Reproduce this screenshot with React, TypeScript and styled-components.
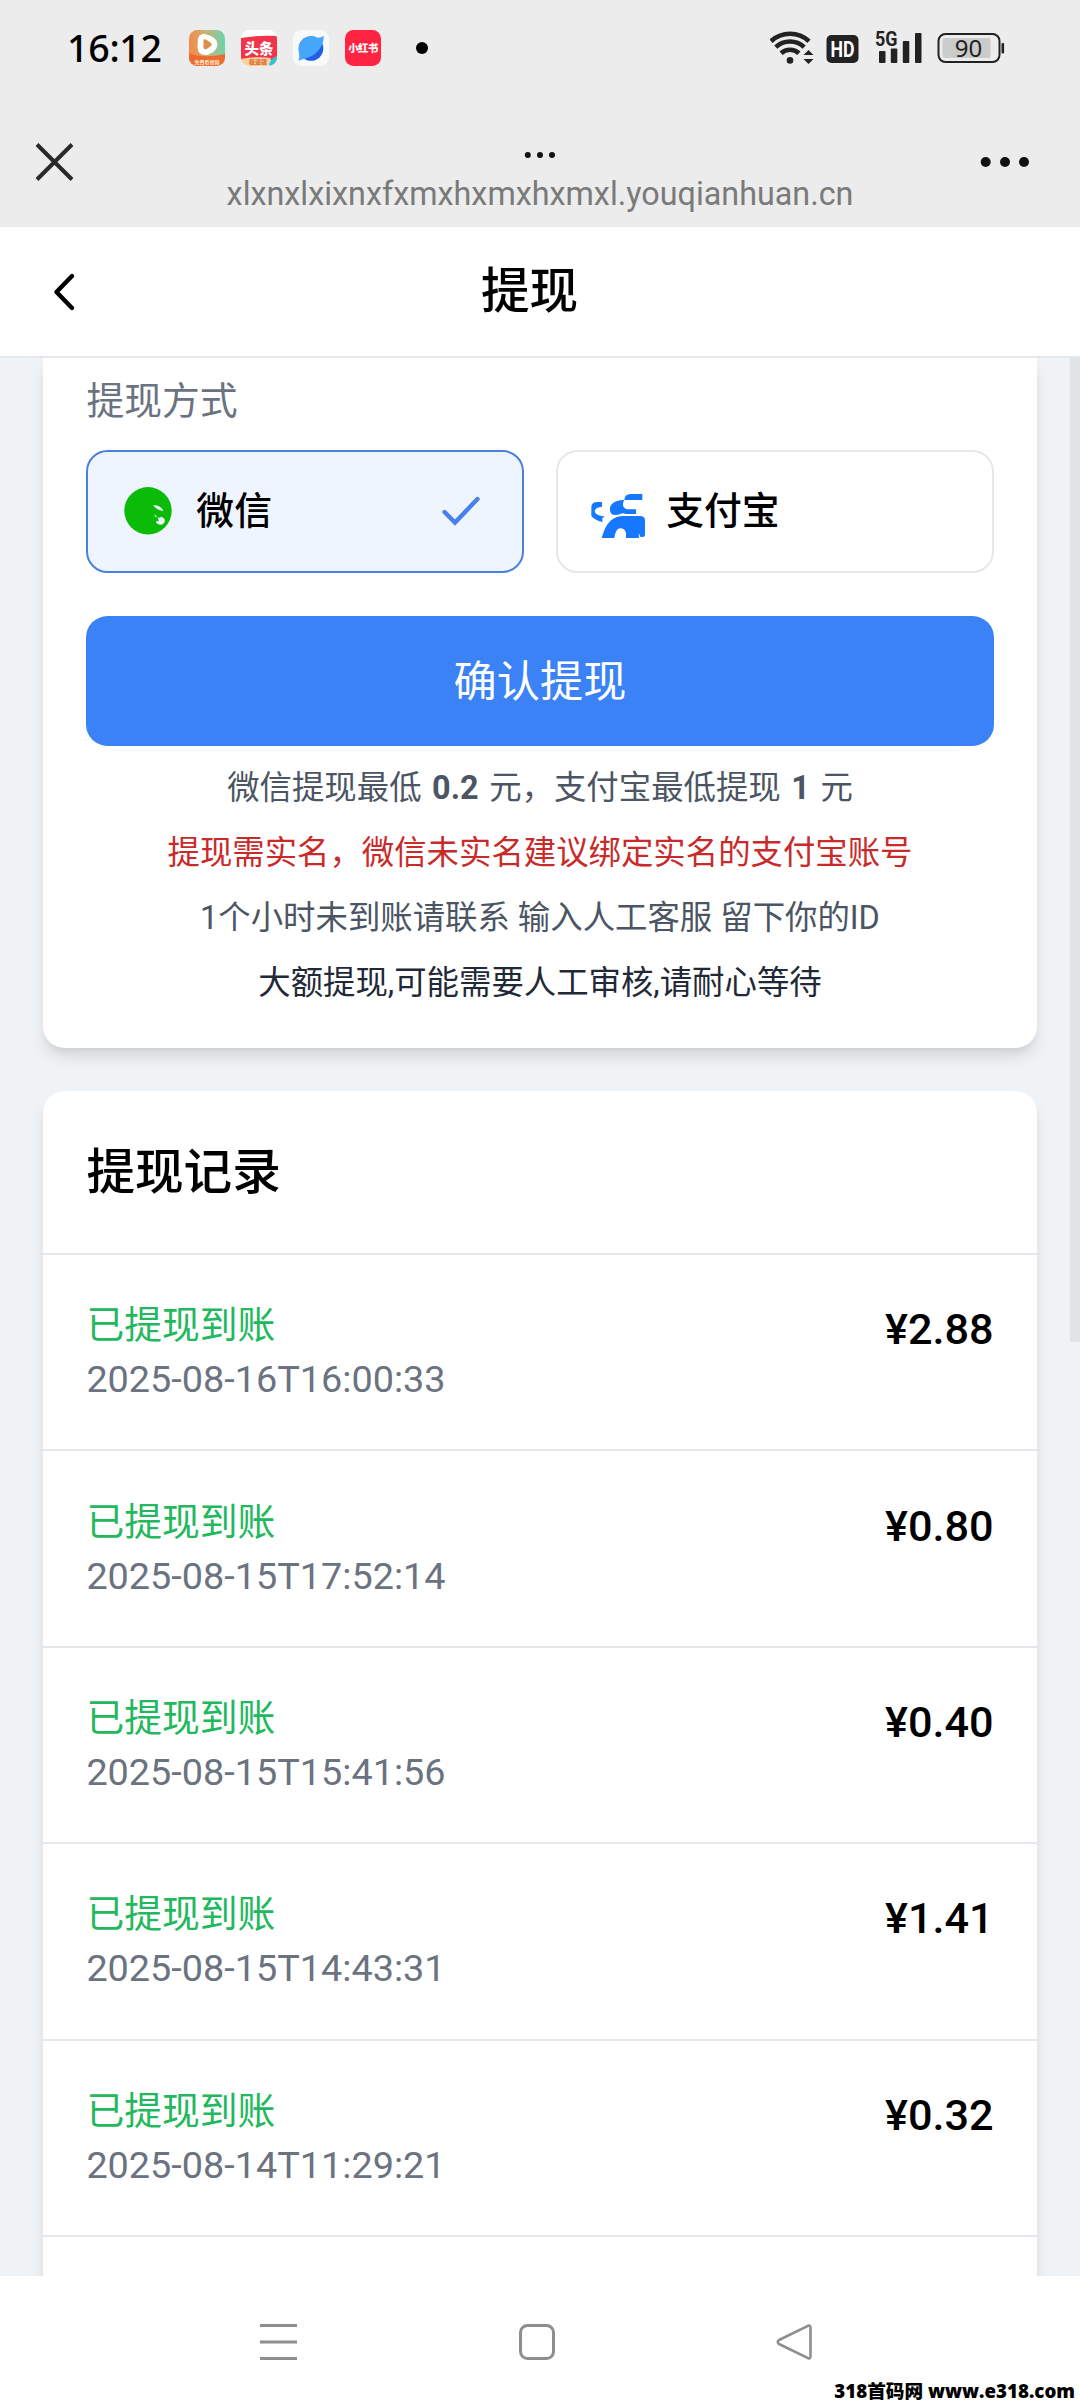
import React from "react";
import styled, { createGlobalStyle } from "styled-components";

const GlobalStyle = createGlobalStyle`
  *, *::before, *::after { box-sizing: border-box; }
  body { margin: 0; background: #fff; }
  button { font: inherit; border: 0; padding: 0; background: none; color: inherit; }
  svg { display: block; flex: none; }
`;

const sans = `Roboto, "Noto Sans CJK SC", sans-serif`;

const Screen = styled.div`
  position: relative;
  display: flex;
  flex-direction: column;
  width: 1080px;
  height: 2408px;
  overflow: hidden;
  background: #eff3f6;
  color: #000;
  font-family: ${sans};
`;

const SystemArea = styled.header`
  flex: none;
  height: 227px;
  background: #ececec;
`;

const StatusBar = styled.div`
  display: flex;
  align-items: center;
  height: 96px;
  padding: 0 74px 0 67px;
`;

const Clock = styled.time`
  width: 122px;
  font: 500 37.6px/48px "Noto Sans", sans-serif;
  letter-spacing: -0.3px;
`;

const AppIcons = styled.div`
  display: flex;
  align-items: center;
  gap: 16px;
`;

const MoreDot = styled.i`
  width: 12px;
  height: 12px;
  margin-left: 35px;
  border-radius: 50%;
  background: #000;
`;

const StatusIcons = styled.div`
  display: flex;
  align-items: center;
  margin-left: auto;
`;

const BrowserBar = styled.div`
  display: grid;
  grid-template-columns: 110px 1fr 110px;
  align-items: center;
  height: 131px;
`;

const IconButton = styled.button<{ $end?: boolean }>`
  display: flex;
  justify-content: ${(p) => (p.$end ? "flex-end" : "flex-start")};
  align-items: center;
`;

const Address = styled.div`
  display: flex;
  flex-direction: column;
  align-items: center;
  align-self: start;
  gap: 15px;
  padding-top: 54.5px;
  color: #7a7a7a;
  font-size: 32.3px;
  line-height: 40px;
  white-space: nowrap;
`;

const TitleBar = styled.div`
  flex: none;
  display: grid;
  grid-template-columns: 110px 1fr 131px;
  align-items: center;
  height: 131px;
  background: #fff;
  border-bottom: 2px solid #e5e7eb;
`;

const Title = styled.h1`
  margin: 0;
  text-align: center;
  font-size: 48.6px;
  font-weight: 500;
  line-height: 76px;
`;

const Content = styled.main`
  flex: 1;
  min-height: 0;
  position: relative;
  display: flex;
  flex-direction: column;
  gap: 43.2px;
  padding: 0 43.2px;
  overflow: hidden;
`;

const Card = styled.section<{ $continued?: boolean }>`
  flex: none;
  background: #fff;
  border-radius: ${(p) => (p.$continued ? "0 0 21.6px 21.6px" : "21.6px")};
  box-shadow: 0 10.8px 16.2px -2.7px rgba(0, 0, 0, 0.1), 0 5.4px 10.8px -5.4px rgba(0, 0, 0, 0.1);
`;

const Form = styled.div`
  display: flex;
  flex-direction: column;
  padding: 16.4px 43.2px 43.2px;
`;

const Label = styled.div`
  margin-bottom: 21.6px;
  color: #6b7280;
  font-size: 37.8px;
  line-height: 54px;
`;

const Methods = styled.div`
  display: grid;
  grid-template-columns: 1fr 1fr;
  gap: 32.4px;
  margin-bottom: 43.2px;
`;

const Method = styled.button<{ $active?: boolean }>`
  display: flex;
  align-items: center;
  gap: 21.6px;
  height: 122.8px;
  padding: 0 41px 0 32.4px;
  border: 2px solid ${(p) => (p.$active ? "#4c80dd" : "#e5e7eb")};
  border-radius: 21.6px;
  background: ${(p) => (p.$active ? "#eff5fe" : "#fff")};
  font-size: 37.8px;
  font-weight: 500;
  line-height: 54px;
`;

const MethodName = styled.span`
  flex: 1;
  text-align: left;
`;

const Submit = styled.button`
  height: 129.6px;
  margin-bottom: 21.6px;
  padding-bottom: 6px;
  border-radius: 21.6px;
  background: #3b82f6;
  color: #fff;
  font-size: 43.2px;
`;

const Notes = styled.div`
  display: flex;
  flex-direction: column;
  gap: 21.6px;
  text-align: center;
  white-space: nowrap;
`;

const Note = styled.p<{ $color: string; $spaced?: boolean }>`
  margin: 0;
  color: ${(p) => p.$color};
  font-size: 32.4px;
  line-height: 43.2px;
  word-spacing: ${(p) => (p.$spaced ? "2.5px" : "normal")};
`;

const RecordsTitle = styled.h2`
  margin: 0;
  padding: 44.2px 43.2px 42.2px;
  border-bottom: 2px solid #e5e7eb;
  font-size: 48.6px;
  font-weight: 500;
  line-height: 75.6px;
`;

const Record = styled.div`
  display: flex;
  justify-content: space-between;
  align-items: flex-start;
  height: 196.4px;
  padding: 43.2px;
  border-bottom: 2px solid #e5e7eb;
`;

const RecordInfo = styled.div`
  display: flex;
  flex-direction: column;
  font-size: 37.8px;
  line-height: 54px;
`;

const RecordStatus = styled.span`
  color: #22b85d;
`;

const RecordTime = styled.span`
  color: #6b7280;
`;

const Amount = styled.span`
  font-size: 43.2px;
  font-weight: 500;
  line-height: 64.8px;
`;

const ScrollThumb = styled.div`
  position: absolute;
  top: 0;
  right: 0;
  width: 10px;
  height: 984px;
  background: #e0e4e7;
`;

const Trace = styled.span<{ $x: number; $y: number; $angle: number }>`
  position: absolute;
  left: ${(p) => p.$x}px;
  top: ${(p) => p.$y}px;
  transform: rotate(${(p) => p.$angle}deg);
  transform-origin: 0 50%;
  color: rgba(0, 0, 0, 0.022);
  font: 27px/30px "Liberation Mono", monospace;
  pointer-events: none;
`;

const NavBar = styled.nav`
  flex: none;
  display: flex;
  justify-content: space-between;
  padding: 48px 268px 0 260px;
  height: 132px;
  background: #fefefe;
`;

const SiteMark = styled.div`
  position: absolute;
  right: 5px;
  bottom: 4px;
  color: #000;
  font: 800 18.7px/26px "Open Sans", "Noto Sans CJK SC", sans-serif;
  white-space: nowrap;
`;

const VideoAppIcon = () => (
  <svg width="36" height="36" viewBox="0 0 36 36">
    <defs>
      <linearGradient id="video" x1="0" y1="0.2" x2="1" y2="0.1">
        <stop offset="0" stopColor="#f58a4b" />
        <stop offset="0.5" stopColor="#c3b478" />
        <stop offset="1" stopColor="#66d6b0" />
      </linearGradient>
      <clipPath id="videoClip"><rect width="36" height="36" rx="8.5" /></clipPath>
    </defs>
    <g clipPath="url(#videoClip)">
      <rect width="36" height="36" fill="url(#video)" />
      <path d="M0 23 Q14 29 36 24 V36 H0Z" fill="#ee6a30" />
      <path d="M9 9 Q10 3.5 16 4 Q28 7 28.5 14 Q28 22 18 25 Q9 26 8.5 17Z" fill="#fff" />
      <path d="M14.5 10.5 Q15 8.8 17 9.5 L22 13 Q23.5 14.5 22 16 L17.5 19 Q15.5 20 14.5 18Z" fill="#dd8d4d" />
      <text x="18" y="34" textAnchor="middle" fontSize="5" fontWeight="700" fill="#ffe9c9" fontFamily="Noto Sans CJK SC">免费看视频</text>
    </g>
  </svg>
);

const NewsAppIcon = () => (
  <svg width="36" height="36" viewBox="0 0 36 36">
    <defs><clipPath id="newsClip"><rect width="36" height="36" rx="8.5" /></clipPath></defs>
    <g clipPath="url(#newsClip)">
      <rect width="36" height="36" fill="#fff" />
      <path d="M0 8 Q18 5 36 6 V30 H0Z" fill="#f1344a" />
      <path d="M0 29 Q16 26 30 28 L27 36 H0Z" fill="#fbd09a" />
      <path d="M28 36 Q28 29 36 26 V36Z" fill="#35c4cc" />
      <text x="18" y="23.5" textAnchor="middle" fontSize="14.5" fontWeight="900" fill="#fff" fontFamily="Noto Sans CJK SC">头条</text>
      <text x="17" y="34.3" textAnchor="middle" fontSize="6" fontWeight="700" fill="#d8662f" fontFamily="Noto Sans CJK SC">极速版</text>
    </g>
  </svg>
);

const BrowserAppIcon = () => (
  <svg width="36" height="36" viewBox="0 0 36 36">
    <rect width="36" height="36" rx="8.5" fill="#f8f9fa" />
    <circle cx="18" cy="18.5" r="12.3" fill="#2260e8" />
    <path d="M5.5 30.8 Q7 28 6 23 Q4 14 11 8.5 Q18 4.5 24.5 7.8 Q28 8 30.8 5.7 Q30.8 11 28.5 16 Q23 25.5 13.5 28.3 Q8 29.5 5.5 30.8Z" fill="#45a7fb" />
  </svg>
);

const RedAppIcon = () => (
  <svg width="36" height="36" viewBox="0 0 36 36">
    <rect width="36" height="36" rx="8.5" fill="#ff2442" />
    <text x="18" y="22.3" textAnchor="middle" fontSize="10.3" fontWeight="900" fill="#fff" fontFamily="Noto Sans CJK SC" letterSpacing="-0.5">小红书</text>
  </svg>
);

const SignalIcons = () => (
  <svg width="236" height="40" viewBox="771.5 28 236 40">
    <g fill="none" stroke="#222" strokeWidth="4.6">
      <path d="M772.5 41.2 A28 28 0 0 1 810.5 41.2" />
      <path d="M777.3 47.2 A20.5 20.5 0 0 1 805.7 47.2" />
      <path d="M782.6 53.2 A13 13 0 0 1 800.4 53.2" />
    </g>
    <circle cx="791.5" cy="60.4" r="3.3" fill="#222" />
    <path d="M805 55 L810 50 L815 55Z M805 59 H815 L810 64Z" fill="#222" />
    <rect x="828" y="35" width="32" height="28" rx="5" fill="#222" />
    <text x="844" y="57" textAnchor="middle" fontSize="21.5" fontWeight="700" fill="#fff" fontFamily="Roboto" textLength="24" lengthAdjust="spacingAndGlyphs">HD</text>
    <text x="876.5" y="46" fontSize="20.5" fontWeight="700" fill="#222" fontFamily="Roboto" textLength="22.5" lengthAdjust="spacingAndGlyphs">5G</text>
    <g fill="#222">
      <rect x="880.5" y="51" width="6.5" height="12" rx="1" />
      <rect x="892.3" y="48.5" width="6.5" height="14.5" rx="1" />
      <rect x="904.3" y="41" width="6.5" height="22" rx="1" />
      <rect x="916.5" y="33" width="6.5" height="30" rx="1" />
    </g>
    <rect x="940" y="34" width="61" height="28" rx="7" fill="none" stroke="#222" strokeWidth="2" />
    <rect x="944" y="38" width="48" height="20" rx="2" fill="#cbcbcb" />
    <rect x="1003" y="43" width="2.6" height="10.5" rx="1" fill="#222" />
    <text x="970" y="57" textAnchor="middle" fontSize="24" fill="#222" fontFamily="Noto Sans">90</text>
  </svg>
);

const WechatIcon = () => (
  <svg width="54" height="54" viewBox="0 0 54 54">
    <circle cx="27" cy="26.8" r="23.7" fill="#0abb07" />
    <path d="M32 21.2 Q40 20.8 42.3 27 Q36 26.4 32 21.2Z" fill="#eff5fe" />
    <path d="M33.3 30 L36 32.4 L34.4 33.2Z" fill="#eff5fe" />
    <path d="M36.5 33.2 Q38.5 34.5 40 32.8 Q44 33.8 43.8 37 Q43 40.8 39.5 40.8 Q35 40.2 35 37.6 L38 36.8Z" fill="#eff5fe" />
  </svg>
);

const AlipayIcon = () => (
  <svg width="54" height="54" viewBox="62 12 162 162" fill="#1677ff">
    <path d="M162 60 Q163 42 181 42 H216 V60Z" />
    <path d="M162 60 Q157 66 158 76 Q161 87 172 88 H197 V102 H166 Q158 98 150 102 Q138 107 124 103 Q114 90 122 75 Q134 60 162 60Z" />
    <path d="M63 81 Q63 68 79 66 H95 V80 Q75 82 73 94 Q75 107 104 110 L96 114 V126 Q73 120 63 108Z" />
    <path d="M94 174 Q103 139 122 121 Q137 108 160 108 H211 Q224 109 224 121 V165 Q224 173 210 170 L205 159 L206 174 H167 V160 Q164 145 150 145 Q136 145 132 174Z" />
  </svg>
);

const records = [
  ["2025-08-16T16:00:33", "¥2.88"],
  ["2025-08-15T17:52:14", "¥0.80"],
  ["2025-08-15T15:41:56", "¥0.40"],
  ["2025-08-15T14:43:31", "¥1.41"],
  ["2025-08-14T11:29:21", "¥0.32"],
];

const traces = [
  [312, 662, 7], [645, 680, 35], [185, 930, -76], [380, 1025, -3],
  [20, 1060, 38], [365, 1300, 30], [490, 1480, -84], [730, 1600, 32],
  [165, 390, 8], [10, 1200, 35],
];

export default function App() {
  return (
    <Screen>
      <GlobalStyle />
      <SystemArea>
        <StatusBar>
          <Clock>16:12</Clock>
          <AppIcons>
            <VideoAppIcon />
            <NewsAppIcon />
            <BrowserAppIcon />
            <RedAppIcon />
          </AppIcons>
          <MoreDot />
          <StatusIcons>
            <SignalIcons />
          </StatusIcons>
        </StatusBar>
        <BrowserBar>
          <IconButton aria-label="关闭">
            <svg width="110" height="42" viewBox="0 0 110 42">
              <path d="M37 3.5 L72 38.5 M72 3.5 L37 38.5" stroke="#2a2a2a" strokeWidth="4" />
            </svg>
          </IconButton>
          <Address>
            <svg width="32" height="8" viewBox="0 0 32 8" fill="#111">
              <circle cx="3.8" cy="4" r="3" /><circle cx="16" cy="4" r="3" /><circle cx="28" cy="4" r="3" />
            </svg>
            <span>xlxnxlxixnxfxmxhxmxhxmxl.youqianhuan.cn</span>
          </Address>
          <IconButton $end aria-label="更多">
            <svg width="110" height="12" viewBox="970 0 110 12" fill="#111">
              <circle cx="985.7" cy="6" r="5" /><circle cx="1005" cy="6" r="5" /><circle cx="1024" cy="6" r="5" />
            </svg>
          </IconButton>
        </BrowserBar>
      </SystemArea>
      <TitleBar>
        <IconButton aria-label="返回">
          <svg width="110" height="40" viewBox="0 0 110 40" fill="none">
            <path d="M72 4 L56.5 20 L72 36" stroke="#000" strokeWidth="4.4" strokeLinecap="round" strokeLinejoin="round" />
          </svg>
        </IconButton>
        <Title>提现</Title>
      </TitleBar>
      <Content>
        <Card $continued>
          <Form>
            <Label>提现方式</Label>
            <Methods>
              <Method $active>
                <WechatIcon />
                <MethodName>微信</MethodName>
                <svg width="40" height="32" viewBox="0 0 40 32" fill="none">
                  <path d="M3.5 17 L14 27.5 L36.5 4" stroke="#4880ee" strokeWidth="4.4" strokeLinecap="round" />
                </svg>
              </Method>
              <Method>
                <AlipayIcon />
                <MethodName>支付宝</MethodName>
              </Method>
            </Methods>
            <Submit>确认提现</Submit>
            <Notes>
              <Note $color="#4b5563" $spaced>微信提现最低 <b>0.2</b> 元，支付宝最低提现 <b>1</b> 元</Note>
              <Note $color="#c92a2a">提现需实名，微信未实名建议绑定实名的支付宝账号</Note>
              <Note $color="#4b5563">1个小时未到账请联系 输入人工客服 留下你的ID</Note>
              <Note $color="#1f2937">大额提现,可能需要人工审核,请耐心等待</Note>
            </Notes>
          </Form>
        </Card>
        <Card>
          <RecordsTitle>提现记录</RecordsTitle>
          {records.map(([time, amount]) => (
            <Record key={time}>
              <RecordInfo>
                <RecordStatus>已提现到账</RecordStatus>
                <RecordTime>{time}</RecordTime>
              </RecordInfo>
              <Amount>{amount}</Amount>
            </Record>
          ))}
          <Record />
        </Card>
        {traces.map(([x, y, angle]) => (
          <Trace key={`${x}-${y}`} $x={x} $y={y} $angle={angle} aria-hidden>MRMjUzMDYOOQ==</Trace>
        ))}
        <ScrollThumb />
      </Content>
      <NavBar>
        <svg width="37" height="36" viewBox="0 0 37 36" stroke="#8e8e8e" strokeWidth="3">
          <path d="M0 1.5H37 M0 18H37 M0 34.5H37" />
        </svg>
        <svg width="36" height="36" viewBox="0 0 36 36" fill="none" stroke="#8e8e8e" strokeWidth="3">
          <rect x="1.5" y="1.5" width="33" height="33" rx="7" />
        </svg>
        <svg width="36" height="36" viewBox="0 0 36 36" fill="none" stroke="#8e8e8e" strokeWidth="2.6" strokeLinejoin="round">
          <path d="M31 2.3 Q34.5 0 34.5 4 V32 Q34.5 36 31 33.7 L3 20 Q0.5 18 3 16Z" />
        </svg>
      </NavBar>
      <SiteMark>318首码网 www.e318.com</SiteMark>
    </Screen>
  );
}
